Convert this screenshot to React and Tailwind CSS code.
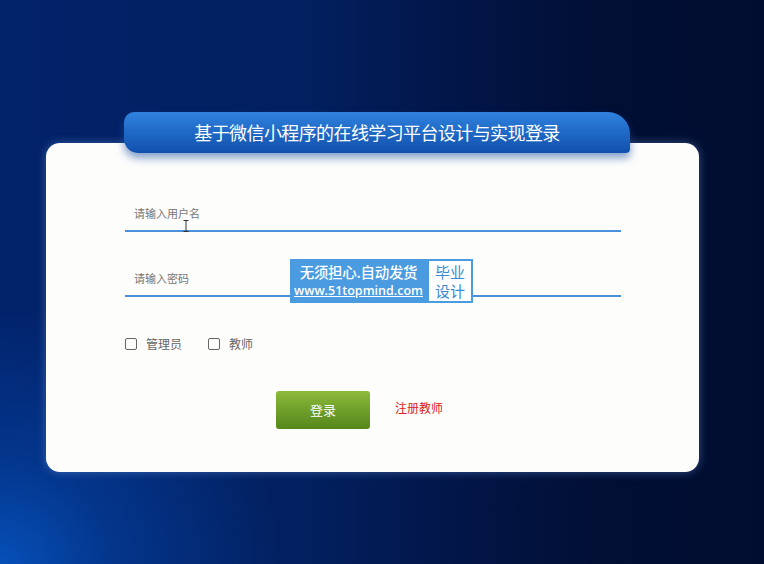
export default function App() {
  return (
    <div
      className="relative w-[764px] h-[564px] overflow-hidden bg-[#021545] pt-[112px]"
      style={{
        fontFamily: '"Noto Sans CJK SC", "Noto Sans", sans-serif',
        backgroundImage:
          "radial-gradient(ellipse 280px 260px at 0% 100%, #0650b8 0%, rgba(5,70,170,0.55) 40%, rgba(3,40,110,0) 100%), linear-gradient(90deg, #02226a 0%, #02205f 40%, #02164a 58%, #010f35 78%, #010d30 100%)",
      }}
    >
      <div className="relative z-10 ml-[124px] w-[506px] h-[41px] rounded-tl-[10px] rounded-bl-[14px] rounded-tr-[22px] rounded-br-[4px] bg-gradient-to-b from-[#2f82de] to-[#1150ad] shadow-[0_5px_8px_rgba(30,80,160,0.55)] flex items-center justify-center">
        <span className="text-[18px] text-white tracking-[-0.6px]">
          基于微信小程序的在线学习平台设计与实现登录
        </span>
      </div>

      <div className="relative -mt-[10px] ml-[46px] w-[653px] h-[329px] rounded-[14px] bg-[#fdfdfc] shadow-[0_0_10px_rgba(120,160,230,0.45)] pt-[53px] pl-[79px]">
        <div className="w-[496px] h-[36px] border-b-2 border-[#4a8fd9] flex items-center pl-[9px] relative">
          <span className="text-[11px] text-[#777]">请输入用户名</span>
          <svg className="absolute left-[58px] top-[24px]" width="6" height="12" viewBox="0 0 6 12">
            <path d="M0.5 0.5h5M3 0.5v11M0.5 11.5h5" stroke="#333" strokeWidth="1" fill="none" />
          </svg>
        </div>
        <div className="mt-[29px] w-[496px] h-[36px] border-b-2 border-[#4a8fd9] flex items-center pl-[9px]">
          <span className="text-[11px] text-[#777]">请输入密码</span>
        </div>

        <div className="mt-[39px] flex items-center h-[16px] text-[12px] text-[#666]">
          <span className="w-[12px] h-[12px] border border-[#666] rounded-[2px]" />
          <span className="ml-[9px]">管理员</span>
          <span className="ml-[26px] w-[12px] h-[12px] border border-[#666] rounded-[2px]" />
          <span className="ml-[9px]">教师</span>
        </div>

        <div className="mt-[39px] flex items-center pl-[151px]">
          <button className="w-[94px] h-[38px] rounded-[3px] bg-gradient-to-b from-[#8cba3c] to-[#55871a] text-white text-[13px] pb-[1px]">
            登录
          </button>
          <span className="ml-[25px] -mt-[5px] text-[12px] text-[#e0201c]">注册教师</span>
        </div>
      </div>

      <div className="absolute left-[290px] top-[259px] flex h-[44px] z-20">
        <div className="w-[137px] bg-[#4a9be0] flex flex-col items-center justify-center">
          <span className="text-[14.5px] leading-[20px] font-medium text-white tracking-[-0.3px]">无须担心.自动发货</span>
          <span className="text-[12.5px] leading-[18px] font-semibold text-white underline" style={{ fontFamily: '"Open Sans", sans-serif' }}>
            www.51topmind.com
          </span>
        </div>
        <div className="w-[46px] bg-white border-2 border-[#4a9be0] flex flex-col items-center justify-center text-[#3a8ad8] text-[15px] leading-[19px]">
          <span>毕业</span>
          <span>设计</span>
        </div>
      </div>
    </div>
  );
}
